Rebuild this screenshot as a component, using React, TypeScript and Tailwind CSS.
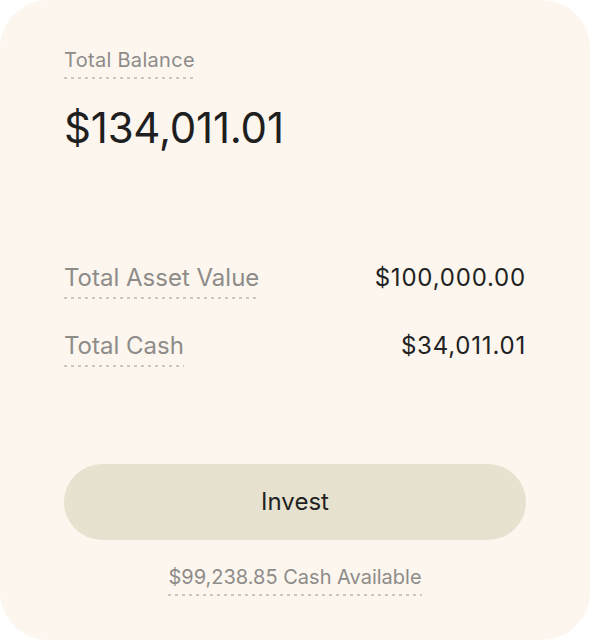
import React from "react";

const font = { fontFamily: "Inter, 'Noto Sans', sans-serif" };

// dotted underline used under every label
const Dotted = ({ children, className = "" }: { children: React.ReactNode; className?: string }) => (
  <span className={`inline-flex flex-col text-[#8e8c89] ${className}`}>
    <span>{children}</span>
    <span className="mt-[5px] h-[2px] w-full bg-[repeating-linear-gradient(90deg,#cac6c0_0_3px,transparent_3px_7px)]" />
  </span>
);

const Row = ({ label, value, className = "" }: { label: string; value: string; className?: string }) => (
  <div className={`flex items-start justify-between ${className}`}>
    <Dotted className="text-[24px] leading-[28px]">{label}</Dotted>
    <span className="text-[24px] leading-[28px] text-[#222222] tracking-[0.8px]">{value}</span>
  </div>
);

export default function App() {
  return (
    <div className="w-[590px] h-[640px] bg-white" style={font}>
      <div className="w-full h-full rounded-[48px] bg-[#fcf6ef] px-16 pt-[48px] flex flex-col">
        <div>
          <Dotted className="text-[20px] leading-[24px] tracking-[0.3px]">Total Balance</Dotted>
        </div>
        <div className="mt-[25px] text-[42px] leading-[48px] text-[#1f1f1f] tracking-[-0.2px]">$134,011.01</div>

        <Row className="mt-[112px]" label="Total Asset Value" value="$100,000.00" />
        <Row className="mt-[33px]" label="Total Cash" value="$34,011.01" />

        <button className="mt-[97px] h-[76px] w-full rounded-full bg-[#e7e1cf] text-[24px] text-[#222222]">
          Invest
        </button>

        <div className="mt-[25px] flex justify-center">
          <Dotted className="text-[20px] leading-[24px]">$99,238.85 Cash Available</Dotted>
        </div>
      </div>
    </div>
  );
}
